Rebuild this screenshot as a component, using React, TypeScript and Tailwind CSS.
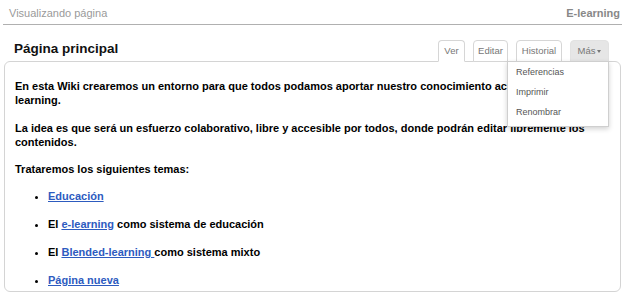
import React from "react";

const tabs = [
  { label: "Ver", w: "w-[27px]", active: true },
  { label: "Editar", w: "w-[35px]", active: false },
  { label: "Historial", w: "w-[46px]", active: false },
];

const menuItems = ["Referencias", "Imprimir", "Renombrar"];

function Link({ children }: { children: React.ReactNode }) {
  return <a className="text-[#2d5bbf] underline underline-offset-[1px]">{children}</a>;
}

export default function App() {
  return (
    <div className="h-[300px] w-[625px] overflow-hidden bg-white font-['Liberation_Sans',Arial,sans-serif]">
      {/* top bar */}
      <div className="mx-[3px] flex h-[25px] items-end justify-between border-b border-[#b0b0b0] pb-[4px] pl-[6px] pr-[2px] text-[11px] leading-[14px]">
        <span className="text-[#9a9a9a]">Visualizando página</span>
        <span className="font-bold text-[#888]">E-learning</span>
      </div>

      {/* title + tabs */}
      <div className="mt-[15px] flex items-end justify-between pl-[14px] pr-[16px]">
        <h1 className="pb-[4px] text-[13.5px] font-bold leading-[16px] text-[#111]">Página principal</h1>
        <div className="relative z-10 -mb-px flex gap-[8px]">
          {tabs.map((t) => (
            <div
              key={t.label}
              className={`${t.w} flex h-[22px] justify-center rounded-t-[4px] border border-[#d6d6d6] bg-white pt-[4px] text-[9.5px] leading-[12px] text-[#777] ${
                t.active ? "border-b-white" : ""
              }`}
            >
              {t.label}
            </div>
          ))}
          <div className="relative flex h-[22px] w-[39px] justify-center rounded-t-[4px] border border-[#e2e2e2] bg-[#e6e6e6] pt-[4px] text-[9.5px] leading-[12px] text-[#777]">
            <span className="flex items-center gap-[2px] self-start">
              Más
              <span className="mt-[1px] h-0 w-0 border-x-[2.5px] border-t-[3px] border-x-transparent border-t-[#777]" />
            </span>
            <div className="absolute right-[-1px] top-[20px] w-[102px] border border-[#cfcfcf] bg-white pb-[4px] shadow-[0_2px_5px_rgba(0,0,0,0.18)]">
              {menuItems.map((m) => (
                <div key={m} className="flex h-[20px] items-center pl-[8px] text-[9px] text-[#555]">
                  {m}
                </div>
              ))}
            </div>
          </div>
        </div>
      </div>

      {/* page card */}
      <div className="mx-[4px] h-[231px] rounded-[6px] border border-[#d4d4d4] px-[10px] pt-[17px] text-[11px] font-bold leading-[14px] text-black">
        <p>
          En esta Wiki crearemos un entorno para que todos podamos aportar nuestro conocimiento acerca del e-
          <br />
          learning.
        </p>
        <p className="mt-[14px]">
          La idea es que será un esfuerzo colaborativo, libre y accesible por todos, donde podrán editar libremente los contenidos.
        </p>
        <p className="mt-[13px]">Trataremos los siguientes temas:</p>
        <ul className="mt-[13px] flex list-disc flex-col gap-[14px] pl-[33px]">
          <li>
            <Link>Educación</Link>
          </li>
          <li>
            El <Link>e-learning</Link> como sistema de educación
          </li>
          <li>
            El <Link>Blended-learning </Link>como sistema mixto
          </li>
          <li>
            <Link>Página nueva</Link>
          </li>
        </ul>
      </div>
    </div>
  );
}
